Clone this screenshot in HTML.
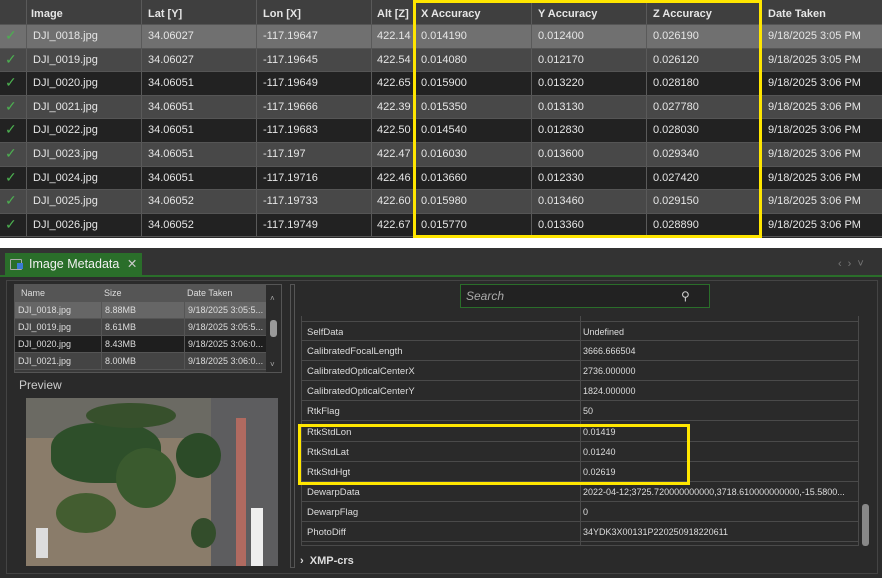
<!DOCTYPE html><html><head><style>
*{box-sizing:border-box;margin:0;padding:0}
body{width:882px;height:578px;background:#fff;font-family:"Liberation Sans",sans-serif;position:relative;overflow:hidden}
.abs{position:absolute}
#top{left:0;top:0;width:882px;height:238px;background:#2a2a2a}
.r{position:absolute;left:0;width:882px;height:24px;border-bottom:1px solid #555;font-size:11px;color:#e6e6e6}
.r div{position:absolute;top:0;height:100%;line-height:23px;padding-left:6px;border-right:1px solid #5a5a5a;white-space:nowrap}
.h{background:#3f3f3f;font-weight:bold;font-size:11px}
.h div{line-height:29px}
.ck{color:#4caf50;font-size:14px}
#bot{left:0;top:248px;width:882px;height:330px;background:#2c2c2c}
.sm{font-size:9px;color:#ddd;white-space:nowrap}
.pr{position:absolute;left:302px;width:556px;height:20px;border-bottom:1px solid #4a4a4a;font-size:9.5px;color:#ddd;line-height:21px;white-space:nowrap}
.pr span{position:absolute;top:0;white-space:nowrap;overflow:hidden}
</style></head><body>
<div id="top" class="abs">
<div class="r h" style="top:0;height:25px">
<div style="left:0;width:27px"></div><div style="left:27px;width:115px;padding-left:4px">Image</div><div style="left:142px;width:115px">Lat [Y]</div><div style="left:257px;width:115px">Lon [X]</div><div style="left:372px;width:43px;padding-left:5px">Alt [Z]</div><div style="left:415px;width:117px">X Accuracy</div><div style="left:532px;width:115px">Y Accuracy</div><div style="left:647px;width:115px">Z Accuracy</div><div style="left:762px;width:120px;border:0">Date Taken</div>
</div>
</div>
<div class="abs" style="left:413px;top:0;width:349px;height:238px;border:3px solid #ffe600;z-index:5"></div>
<div class="abs" style="left:0;top:238px;width:882px;height:2px;background:#fff"></div>
<div id="bot" class="abs">
<div class="abs" style="left:0;top:0;width:882px;height:27px;background:#333"></div>
<div class="abs" style="left:5px;top:5px;width:137px;height:23px;background:#2a6e2a;color:#f0f0f0;font-size:12.5px;line-height:22px;padding-left:24px">Image Metadata <span style="margin-left:4px;color:#ccc">✕</span>
<div class="abs" style="left:5px;top:6px;width:12px;height:11px;border:1px solid #aaa;border-radius:1px"></div><div class="abs" style="left:12px;top:10px;width:6px;height:6px;background:#3a7bd5"></div></div>
<div class="abs" style="left:0;top:27px;width:882px;height:2px;background:#2a6e2a"></div>
<div class="abs" style="left:838px;top:10px;color:#777;font-size:11px;letter-spacing:6px">‹›˅</div>
<div class="abs" style="left:6px;top:32px;width:872px;height:294px;border:1px solid #444;background:#2a2a2a"></div>
<div class="abs" style="left:14px;top:36px;width:268px;height:89px;border:1px solid #555;background:#3a3a3a"></div>
<div class="abs sm" style="left:15px;top:37px;width:251px;height:17px;background:#555;line-height:17px">
<span class="abs" style="left:6px">Name</span><span class="abs" style="left:89px">Size</span><span class="abs" style="left:172px">Date Taken</span></div>
<div class="abs" style="left:266px;top:37px;width:15px;height:87px;background:#2b2b2b"></div>
<div class="abs" style="left:270px;top:72px;width:7px;height:17px;background:#999;border-radius:3px"></div>
<div class="abs" style="left:270px;top:46px;color:#aaa;font-size:8px">˄</div>
<div class="abs" style="left:270px;top:112px;color:#aaa;font-size:8px">˅</div>
<div class="abs" style="left:19px;top:130px;color:#ccc;font-size:12px">Preview</div>
<div class="abs" style="left:26px;top:150px;width:252px;height:168px;background:#8a7c6a;overflow:hidden">
<div class="abs" style="left:0;top:0;width:252px;height:40px;background:#6b6a63"></div>
<div class="abs" style="left:185px;top:0;width:67px;height:168px;background:#5d5d5f"></div>
<div class="abs" style="left:210px;top:20px;width:10px;height:148px;background:#b06a60"></div>
<div class="abs" style="left:225px;top:110px;width:12px;height:58px;background:#eee"></div>
<div class="abs" style="left:25px;top:25px;width:110px;height:60px;border-radius:40%;background:#2e4f2a"></div>
<div class="abs" style="left:90px;top:50px;width:60px;height:60px;border-radius:50%;background:#3a5a2e"></div>
<div class="abs" style="left:150px;top:35px;width:45px;height:45px;border-radius:50%;background:#2c4b28"></div>
<div class="abs" style="left:30px;top:95px;width:60px;height:40px;border-radius:50%;background:#435d30"></div>
<div class="abs" style="left:60px;top:5px;width:90px;height:25px;border-radius:50%;background:#37502c"></div>
<div class="abs" style="left:10px;top:130px;width:12px;height:30px;background:#ddd"></div>
<div class="abs" style="left:165px;top:120px;width:25px;height:30px;border-radius:50%;background:#334d2b"></div>
</div>
<div class="abs" style="left:290px;top:36px;width:5px;height:284px;border:1px solid #555"></div>
<div class="abs" style="left:460px;top:36px;width:250px;height:24px;border:1px solid #2a6e2a;background:#222;color:#aaa;font-style:italic;font-size:12px;line-height:22px;padding-left:5px">Search<span class="abs" style="left:220px;font-style:normal;color:#ccc">⚲</span></div>
<div class="abs" style="left:301px;top:68px;width:558px;height:230px;border:1px solid #4a4a4a;border-top:none"></div>
<div class="abs" style="left:580px;top:68px;width:1px;height:230px;background:#4a4a4a"></div>
<div class="abs" style="left:298px;top:176px;width:392px;height:61px;border:3px solid #ffe600;z-index:3"></div>
<div class="abs" style="left:862px;top:256px;width:7px;height:42px;background:#888;border-radius:3px"></div>
<div class="abs" style="left:300px;top:307px;color:#ddd;font-size:11px;font-weight:bold">›&nbsp; XMP-crs</div>
</div>
<script>
var d=[["DJI_0018.jpg","34.06027","-117.19647","422.14","0.014190","0.012400","0.026190","9/18/2025 3:05 PM"],
["DJI_0019.jpg","34.06027","-117.19645","422.54","0.014080","0.012170","0.026120","9/18/2025 3:05 PM"],
["DJI_0020.jpg","34.06051","-117.19649","422.65","0.015900","0.013220","0.028180","9/18/2025 3:06 PM"],
["DJI_0021.jpg","34.06051","-117.19666","422.39","0.015350","0.013130","0.027780","9/18/2025 3:06 PM"],
["DJI_0022.jpg","34.06051","-117.19683","422.50","0.014540","0.012830","0.028030","9/18/2025 3:06 PM"],
["DJI_0023.jpg","34.06051","-117.197","422.47","0.016030","0.013600","0.029340","9/18/2025 3:06 PM"],
["DJI_0024.jpg","34.06051","-117.19716","422.46","0.013660","0.012330","0.027420","9/18/2025 3:06 PM"],
["DJI_0025.jpg","34.06052","-117.19733","422.60","0.015980","0.013460","0.029150","9/18/2025 3:06 PM"],
["DJI_0026.jpg","34.06052","-117.19749","422.67","0.015770","0.013360","0.028890","9/18/2025 3:06 PM"]];
var L=[27,142,257,372,415,532,647,762,882],h="",t=document.getElementById("top");
d.forEach(function(r,i){var bg=i==0?"#707070":(i%2?"#484848":"#222");
h+='<div class="r" style="top:'+(25+i*23.6)+'px;height:23.6px;background:'+bg+'"><div class="ck" style="left:0;width:27px;padding-left:5px;line-height:20px">✓</div>';
r.forEach(function(c,j){h+='<div style="left:'+L[j]+'px;width:'+(L[j+1]-L[j])+'px;'+(j==3?'padding-left:5px;':'')+(j==7?'border:0':'')+'">'+c+'</div>'});h+='</div>'});
t.innerHTML+=h;
var s="",b=document.getElementById("bot");
[["DJI_0018.jpg","8.88MB","9/18/2025 3:05:5...","#666"],["DJI_0019.jpg","8.61MB","9/18/2025 3:05:5...","#444"],["DJI_0020.jpg","8.43MB","9/18/2025 3:06:0...","#1e1e1e"],["DJI_0021.jpg","8.00MB","9/18/2025 3:06:0...","#444"]].forEach(function(r,i){
s+='<div class="abs sm" style="left:15px;top:'+(54+i*17)+'px;width:251px;height:17px;line-height:16px;background:'+r[3]+';border-bottom:1px solid #555"><span class="abs" style="left:3px">'+r[0]+'</span><span class="abs" style="left:86px;border-left:1px solid #555;padding-left:3px;height:17px">'+r[1]+'</span><span class="abs" style="left:169px;border-left:1px solid #555;padding-left:3px;height:17px">'+r[2]+'</span></div>'});
[["SelfData","Undefined"],["CalibratedFocalLength","3666.666504"],["CalibratedOpticalCenterX","2736.000000"],["CalibratedOpticalCenterY","1824.000000"],["RtkFlag","50"],["RtkStdLon","0.01419"],["RtkStdLat","0.01240"],["RtkStdHgt","0.02619"],["DewarpData","2022-04-12;3725.720000000000,3718.610000000000,-15.5800..."],["DewarpFlag","0"],["PhotoDiff","34YDK3X00131P220250918220611"]].forEach(function(r,i){
s+='<div class="pr" style="top:'+(73+i*20.1)+'px;border-top:'+(i==0?'1px solid #4a4a4a':'0')+'"><span style="left:5px">'+r[0]+'</span><span style="left:281px;width:273px;font-size:9px">'+r[1]+'</span></div>'});
b.innerHTML+=s;
</script>
</body></html>
